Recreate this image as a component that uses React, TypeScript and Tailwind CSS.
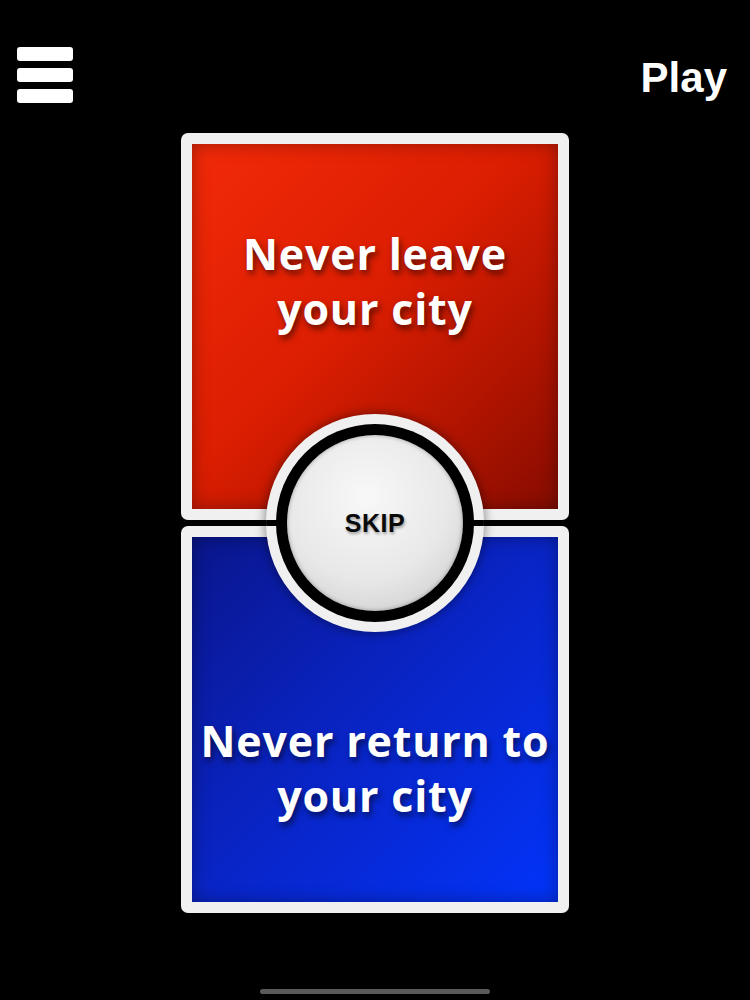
const textFont = "font-['Open_Sans','Liberation_Sans',sans-serif]";

function Hamburger() {
  return (
    <div className="flex flex-col gap-[7px]">
      <div className="w-[56px] h-[14px] rounded-[3px] bg-white" />
      <div className="w-[56px] h-[14px] rounded-[3px] bg-white" />
      <div className="w-[56px] h-[14px] rounded-[3px] bg-white" />
    </div>
  );
}

function SkipButton() {
  return (
    <div className="absolute left-1/2 -translate-x-1/2 top-[281px] w-[218px] h-[218px] rounded-full bg-[#f0f0f0] shadow-[0_0_10px_2px_rgba(0,0,0,0.35)] overflow-hidden flex items-center justify-center">
      <div className="absolute inset-x-0 top-[106px] h-[6px] bg-black" />
      <div className="relative w-[198px] h-[198px] rounded-full bg-black flex items-center justify-center">
        <div className="w-[176px] h-[176px] rounded-full bg-[radial-gradient(circle_at_45%_35%,#f8f8f8_0%,#e8e8e8_55%,#c6c6c6_100%)] shadow-[inset_0_0_4px_rgba(0,0,0,0.35)] flex items-center justify-center">
          <span className="font-['Liberation_Sans',Arial,sans-serif] font-bold text-[25px] leading-none tracking-[0.5px] text-[#0a0a0a] [text-shadow:1px_2px_3px_rgba(0,0,0,0.35)]">
            SKIP
          </span>
        </div>
      </div>
    </div>
  );
}

function OptionCard({ lines, tone }: { lines: string[]; tone: "red" | "blue" }) {
  const inner =
    tone === "red"
      ? "bg-[linear-gradient(135deg,#f22a08_0%,#dc1e02_45%,#b01400_75%,#860c00_100%)] pt-[82px]"
      : "bg-[linear-gradient(135deg,#0a168c_0%,#0a22bc_40%,#062ce0_75%,#0234fa_100%)] pt-[176px]";
  return (
    <div className="h-[387px] rounded-[7px] bg-[#f0f0f0] p-[11px]">
      <div className={`h-full ${inner} shadow-[inset_0_0_18px_rgba(0,0,0,0.35)] flex flex-col items-center`}>
        {lines.map((l) => (
          <div
            key={l}
            className={`${textFont} font-bold text-[43px] leading-[55px] tracking-[0.8px] text-white whitespace-nowrap [text-shadow:2px_4px_6px_rgba(0,0,0,0.55)]`}
          >
            {l}
          </div>
        ))}
      </div>
    </div>
  );
}

export default function App() {
  return (
    <div className="w-[750px] h-[1000px] bg-black flex flex-col overflow-hidden">
      <div className="h-[133px] flex items-start justify-between pt-[47px] pl-[17px] pr-[23px]">
        <Hamburger />
        <div className="mt-[10px] font-['Liberation_Sans',Arial,sans-serif] font-bold text-[42px] leading-[42px] text-white">
          Play
        </div>
      </div>
      <div className="relative ml-[181px] w-[388px] flex flex-col gap-[6px]">
        <OptionCard tone="red" lines={["Never leave", "your city"]} />
        <OptionCard tone="blue" lines={["Never return to", "your city"]} />
        <SkipButton />
      </div>
      <div className="mt-[76px] mx-auto w-[230px] h-[5px] rounded-full bg-[#5a5a5a]" />
    </div>
  );
}
